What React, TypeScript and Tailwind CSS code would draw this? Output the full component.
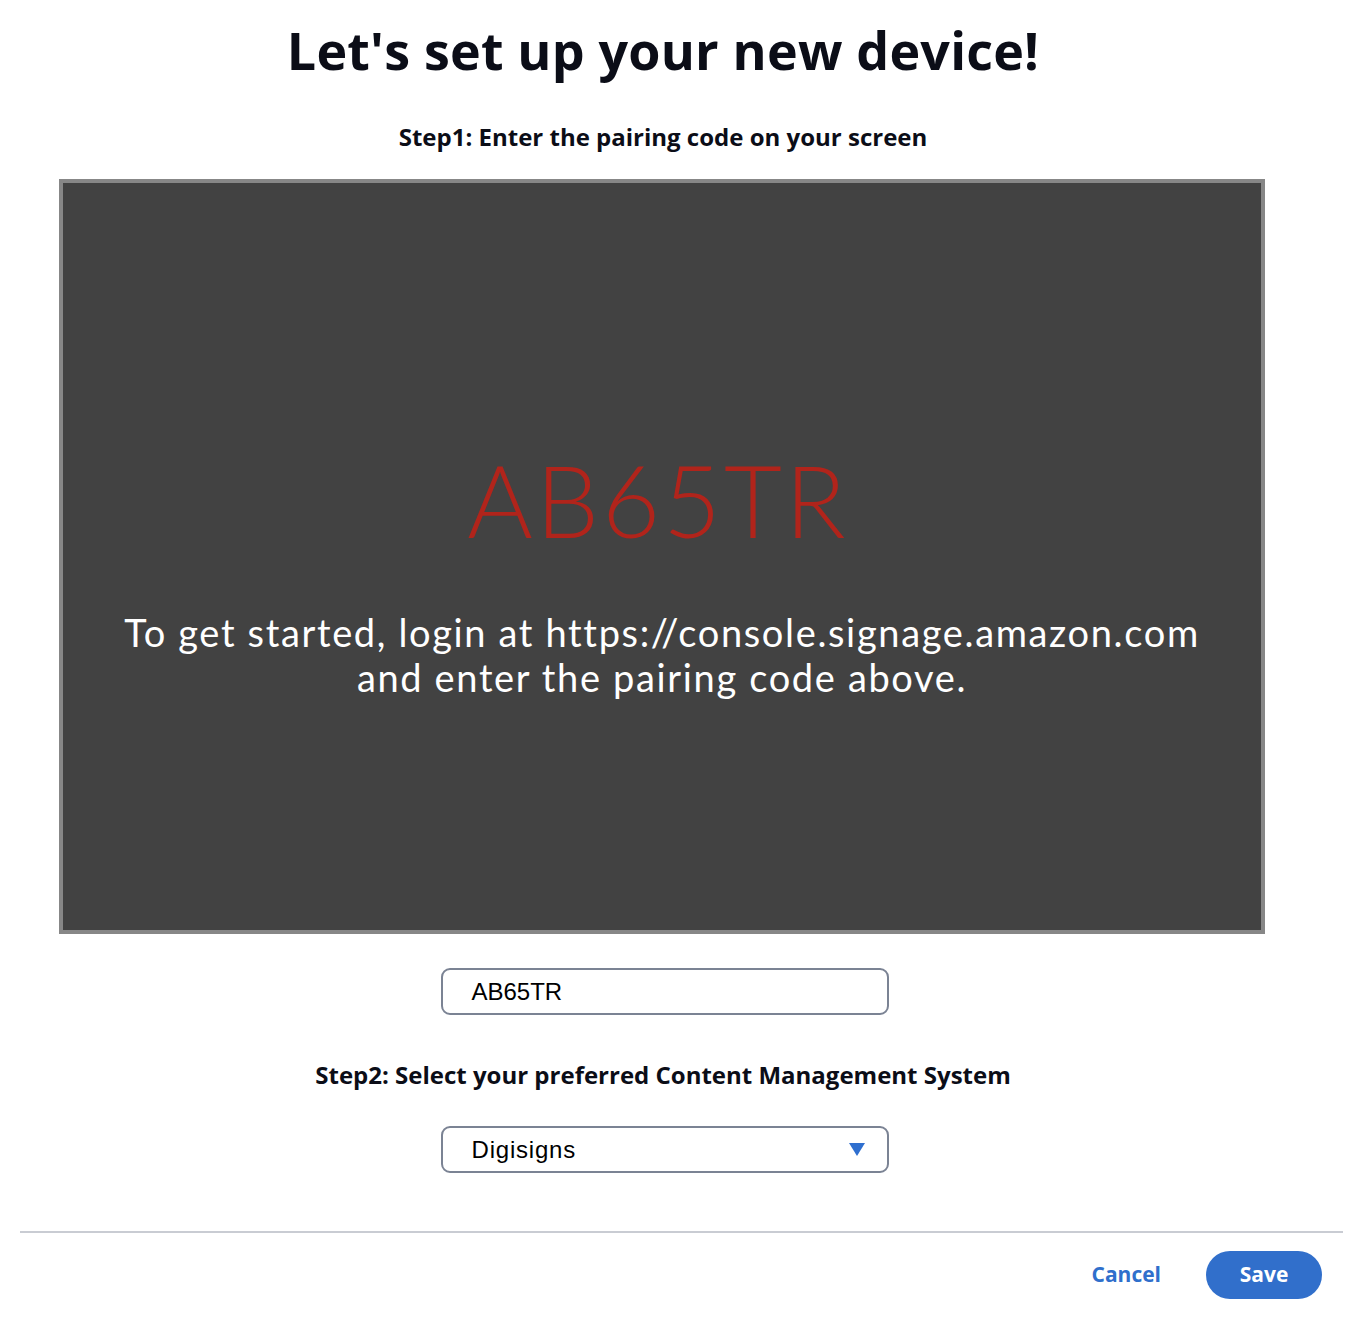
import React from "react";

export default function App() {
  return (
    <div className="w-[1362px] h-[1344px] bg-white flex flex-col items-center" style={{ fontFamily: '"Open Sans", sans-serif' }}>
      <div className="w-[1362px] pr-[36px] flex flex-col items-center">
        <h1 className="mt-[18px] text-[52px] leading-[64px] font-bold text-[#0b0d17] tracking-[0.2px]">Let's set up your new device!</h1>
        <p className="mt-[40px] text-[24px] leading-[30px] font-bold text-[#0b0d17] tracking-[0px]">Step1: Enter the pairing code on your screen</p>
        <div className="mt-[27px] w-[1206px] h-[755px] ml-[-2px] border-[4px] border-[#878787] bg-[#424242] flex flex-col items-center" style={{ fontFamily: 'Lato, sans-serif' }}>
          <div className="mt-[256px] pr-[8px] text-[100px] leading-[120px] font-light text-[#b1241b] tracking-[3px]">AB65TR</div>
          <div className="mt-[51px] text-[38px] leading-[45px] text-white text-center tracking-[1.65px]">
            To get started, login at https://console.signage.amazon.com
            <br />
            and enter the pairing code above.
          </div>
        </div>
        <div className="mt-[34px] w-[448px] h-[47px] ml-[3px] border-2 border-[#7b8394] rounded-[9px] flex items-center pl-[29px] text-[24px] text-black" style={{ fontFamily: '"Liberation Sans", Arial, sans-serif' }}>
          AB65TR
        </div>
        <p className="mt-[45px] text-[24px] leading-[30px] font-bold text-[#0b0d17] tracking-[0px]">Step2: Select your preferred Content Management System</p>
        <div className="mt-[36px] w-[448px] h-[47px] ml-[3px] border-2 border-[#7b8394] rounded-[9px] flex items-center justify-between pl-[29px] pr-[22px] text-[24px] text-black tracking-[0.8px]" style={{ fontFamily: '"Liberation Sans", Arial, sans-serif' }}>
          <span>Digisigns</span>
          <svg width="16" height="13" viewBox="0 0 16 13"><path d="M0 0 H16 L8 13 Z" fill="#2f6fcf" /></svg>
        </div>
      </div>
      <div className="mt-[58px] w-[1323px] h-[2px] bg-[#c9ccd3]" />
      <div className="w-full flex justify-end items-center pr-[40px] mt-[18px] gap-[45px]">
        <button className="text-[21px] font-bold text-[#2f6fcc]">Cancel</button>
        <button className="w-[116px] h-[48px] rounded-full bg-[#316fcb] text-white text-[21px] font-bold">Save</button>
      </div>
    </div>
  );
}
